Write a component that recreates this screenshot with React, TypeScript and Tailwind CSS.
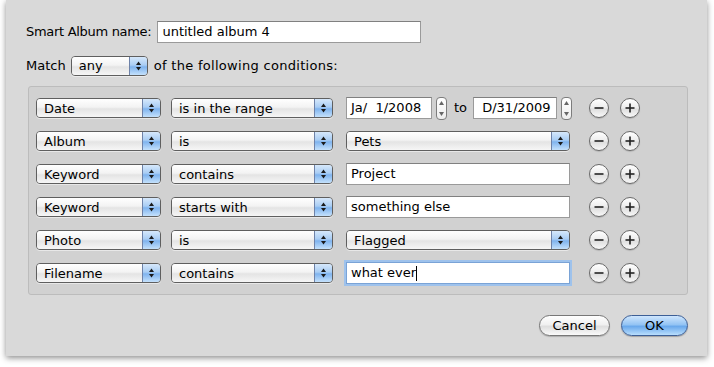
import React from "react";

const font = { fontFamily: '"DejaVu Sans", "Lucida Grande", Verdana, sans-serif' };

function Arrows() {
  return (
    <svg width="7" height="10" viewBox="0 0 7 10">
      <polygon points="3.5,0.5 6,4 1,4" fill="#1a1a1a" />
      <polygon points="3.5,9.5 6,6 1,6" fill="#1a1a1a" />
    </svg>
  );
}

function Popup({ label, w }: { label: string; w: string }) {
  return (
    <div
      className={`${w} h-[20px] flex items-stretch rounded-[4px] border border-[#5f5f5f] overflow-hidden shadow-[0_1px_0_rgba(255,255,255,0.5)]`}
    >
      <div className="flex-1 flex items-center pl-[7px] text-[13px] text-black bg-[linear-gradient(#ffffff,#f3f3f3_45%,#e4e4e4_55%,#f6f6f6)] leading-none">
        {label}
      </div>
      <div className="w-[18px] flex items-center justify-center border-l border-[#6e82a8] bg-[linear-gradient(#d6e8fb,#a9cdf4_45%,#7fb3ee_55%,#c4e1fc)]">
        <Arrows />
      </div>
    </div>
  );
}

function Field({ value, w, focus = false }: { value: string; w: string; focus?: boolean }) {
  return (
    <div
      className={`${w} h-[22px] bg-white flex items-center pl-[4px] text-[13px] text-black whitespace-pre border ${
        focus
          ? "border-[#7aa3d6] shadow-[0_0_0_2px_#9ec2ec]"
          : "border-[#9a9a9a] border-t-[#808080]"
      }`}
    >
      {value}
      {focus && <span className="inline-block w-px h-[15px] bg-black" />}
    </div>
  );
}

function Stepper() {
  return (
    <div className="w-[11px] h-[23px] rounded-[4px] border border-[#7d7d7d] bg-[linear-gradient(#ffffff,#ededed)] flex flex-col items-center justify-between py-[3px]">
      <svg width="5" height="4" viewBox="0 0 5 4">
        <polygon points="2.5,0 5,4 0,4" fill="#666" />
      </svg>
      <svg width="5" height="4" viewBox="0 0 5 4">
        <polygon points="2.5,4 5,0 0,0" fill="#666" />
      </svg>
    </div>
  );
}

function RoundBtn({ plus }: { plus?: boolean }) {
  return (
    <div className="w-[20px] h-[20px] rounded-full border border-[#6a6a6a] bg-[linear-gradient(#ffffff,#ececec_50%,#dedede_55%,#f8f8f8)] flex items-center justify-center shadow-[0_1px_1px_rgba(0,0,0,0.15)]">
      <svg width="12" height="12" viewBox="0 0 12 12">
        <line x1="1.5" y1="6" x2="10.5" y2="6" stroke="#222" strokeWidth="1.6" />
        {plus && <line x1="6" y1="1.5" x2="6" y2="10.5" stroke="#222" strokeWidth="1.6" />}
      </svg>
    </div>
  );
}

const rows: { a: string; b: string; c: React.ReactNode }[] = [
  {
    a: "Date",
    b: "is in the range",
    c: (
      <div className="flex items-center">
        <Field value="Ja/  1/2008" w="w-[86px]" />
        <div className="ml-[4px]">
          <Stepper />
        </div>
        <span className="ml-[7px] text-[13px]">to</span>
        <div className="ml-[6px]">
          <Field value={" D/31/2009"} w="w-[84px]" />
        </div>
        <div className="ml-[4px]">
          <Stepper />
        </div>
      </div>
    ),
  },
  { a: "Album", b: "is", c: <Popup label="Pets" w="w-[224px]" /> },
  { a: "Keyword", b: "contains", c: <Field value="Project" w="w-[224px]" /> },
  { a: "Keyword", b: "starts with", c: <Field value="something else" w="w-[224px]" /> },
  { a: "Photo", b: "is", c: <Popup label="Flagged" w="w-[224px]" /> },
  { a: "Filename", b: "contains", c: <Field value="what ever" w="w-[224px]" focus /> },
];

export default function App() {
  return (
    <div className="w-[714px] h-[367px] bg-white overflow-hidden" style={font}>
      <div className="ml-[6px] w-[701px] h-[356px] bg-[#d9d9d9] shadow-[0_2px_6px_rgba(0,0,0,0.45)] flex flex-col text-black">
        <div className="mt-[21px] ml-[20px] flex items-center h-[22px]">
          <span className="text-[13px] tracking-[-0.3px]">Smart Album name:</span>
          <div className="ml-[6px]">
            <Field value="untitled album 4" w="w-[264px]" />
          </div>
        </div>
        <div className="mt-[12px] ml-[20px] flex items-center h-[21px]">
          <span className="text-[13px]">Match</span>
          <div className="ml-[5px]">
            <Popup label="any" w="w-[77px]" />
          </div>
          <span className="ml-[6px] text-[13px] tracking-[0.3px]">of the following conditions:</span>
        </div>
        <div className="mt-[10px] ml-[22px] w-[660px] h-[209px] bg-[#d1d1d1] border border-[#bcbcbc] rounded-[3px] pt-[11px] pl-[7px] flex flex-col gap-[13px]">
          {rows.map((r, i) => (
            <div key={i} className="flex items-center h-[20px]">
              <Popup label={r.a} w="w-[125px]" />
              <div className="ml-[10px]">
                <Popup label={r.b} w="w-[162px]" />
              </div>
              <div className="ml-[13px] w-[227px]">{r.c}</div>
              <div className="ml-[16px] flex gap-[11px]">
                <RoundBtn />
                <RoundBtn plus />
              </div>
            </div>
          ))}
        </div>
        <div className="mt-[20px] mr-[19px] flex justify-end gap-[11px]">
          <div className="w-[71px] h-[21px] rounded-full border border-[#777] bg-[linear-gradient(#ffffff,#f0f0f0_45%,#dedede_55%,#fafafa)] flex items-center justify-center text-[13px] shadow-[0_1px_1px_rgba(0,0,0,0.2)]">
            Cancel
          </div>
          <div className="w-[67px] h-[21px] rounded-full border border-[#3d5f96] bg-[linear-gradient(#cfe6fd,#94c4f4_45%,#6aa9ec_55%,#b9defd)] flex items-center justify-center text-[13px] shadow-[0_1px_1px_rgba(0,0,0,0.25)]">
            OK
          </div>
        </div>
      </div>
    </div>
  );
}
